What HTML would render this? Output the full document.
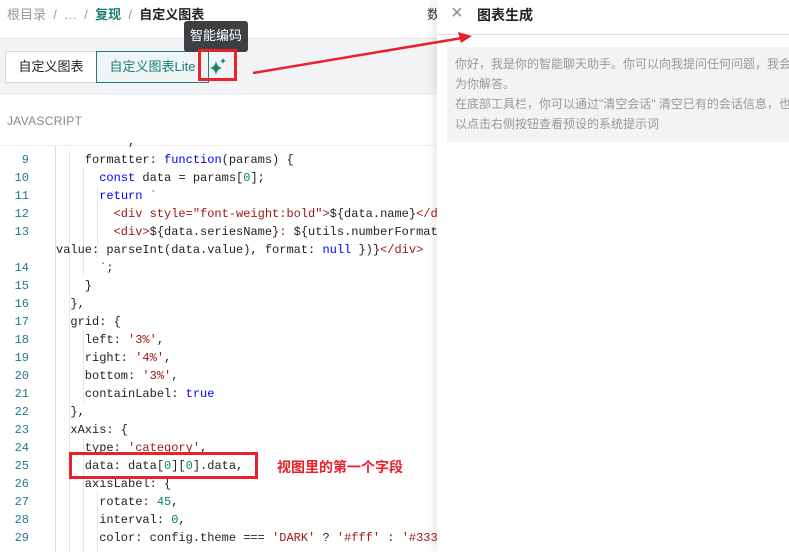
<!DOCTYPE html>
<html><head><meta charset="utf-8"><style>
*{margin:0;padding:0;box-sizing:border-box}
body{width:789px;height:552px;overflow:hidden;position:relative;background:#fff;font-family:"Liberation Sans","Noto Sans CJK SC",sans-serif}
.abs{position:absolute}
.crumb{left:7px;top:4px;font-size:13px;color:#999;white-space:nowrap}
.crumb b{font-weight:bold}
.bar{left:0;top:38px;width:437px;height:57px;background:#f2f3f5;border-top:1px solid #e3e5e8}
.btn{top:51px;height:32px;font-size:13px;line-height:30px;text-align:center}
.code{font-family:"Liberation Mono",monospace;font-size:12px;line-height:18px;white-space:pre;color:#222}
.ln{left:0;width:29px;text-align:right;color:#237893;font-family:"Liberation Mono",monospace;font-size:12px;line-height:18px}
.k{color:#00f}.s{color:#a31515}.n{color:#098658}
.panel{left:437px;top:0;width:352px;height:552px;background:#fff;box-shadow:-4px 0 8px rgba(0,0,0,.08)}
</style></head><body>
<div class="abs crumb">根目录 &nbsp;/ &nbsp;… &nbsp;/ &nbsp;<b style="color:#1b7f74">复现</b> &nbsp;/ &nbsp;<b style="color:#222">自定义图表</b></div>
<div class="abs" style="left:427px;top:4px;font-size:13px;color:#333">数</div>
<div class="abs bar"></div>
<div class="abs btn" style="left:5px;width:92px;border:1px solid #d5d8dc;background:#fff;color:#222">自定义图表</div>
<div class="abs btn" style="left:96px;width:113px;border:1px solid #1b7f74;background:#eef5f4;color:#1b7f74">自定义图表Lite</div>
<svg class="abs" style="left:208px;top:57px" width="20" height="20" viewBox="0 0 20 20"><path d="M8 4 Q9 10 14 11 Q9 12 8 18 Q7 12 2 11 Q7 10 8 4Z" fill="#1b7f74"/><path d="M15 1 Q15.5 3.5 18 4 Q15.5 4.5 15 7 Q14.5 4.5 12 4 Q14.5 3.5 15 1Z" fill="#1b7f74"/></svg>
<div class="abs" style="left:184px;top:21px;width:64px;height:31px;background:#3c4043;border-radius:3px;color:#fff;font-size:13px;line-height:29px;text-align:center">智能编码</div>
<div class="abs" style="left:198px;top:49px;width:39px;height:32px;border:3px solid #e8212a"></div>
<div class="abs" style="left:7px;top:114px;font-size:12px;color:#888;letter-spacing:.3px">JAVASCRIPT</div>
<div class="abs" style="left:0;top:145px;width:437px;height:1px;background:#eee"></div>
<div class="abs" style="left:55px;top:146px;width:1px;height:406px;background:#ddd"></div>
<div class="abs" style="left:69px;top:150px;width:1px;height:402px;background:#e6e6e6"></div>
<div class="abs" style="left:83px;top:168px;width:1px;height:108px;background:#e6e6e6"></div>
<div class="abs" style="left:97px;top:186px;width:1px;height:72px;background:#e6e6e6"></div>
<div class="abs" style="left:83px;top:330px;width:1px;height:72px;background:#e6e6e6"></div>
<div class="abs" style="left:83px;top:438px;width:1px;height:114px;background:#e6e6e6"></div>
<div class="abs" style="left:97px;top:492px;width:1px;height:60px;background:#e6e6e6"></div>
<div class="abs ln" style="top:151px">9<br>10<br>11<br>12<br>13<br><br>14<br>15<br>16<br>17<br>18<br>19<br>20<br>21<br>22<br>23<br>24<br>25<br>26<br>27<br>28<br>29</div>
<div class="abs code" style="left:56px;top:133px">          ,
    formatter: <span class="k">function</span>(params) {
      <span class="k">const</span> data = params[<span class="n">0</span>];
      <span class="k">return</span> <span class="s">`</span>
        <span class="s">&lt;div style="font-weight:bold"&gt;</span>${data.name}<span class="s">&lt;/d</span>
        <span class="s">&lt;div&gt;</span>${data.seriesName}<span class="s">: </span>${utils.numberFormat
value: parseInt(data.value), format: <span class="k">null</span> })}<span class="s">&lt;/div&gt;</span>
      <span class="s">`</span>;
    }
  },
  grid: {
    left: <span class="s">'3%'</span>,
    right: <span class="s">'4%'</span>,
    bottom: <span class="s">'3%'</span>,
    containLabel: <span class="k">true</span>
  },
  xAxis: {
    type: <span class="s">'category'</span>,
    data: data[<span class="n">0</span>][<span class="n">0</span>].data,
    axisLabel: {
      rotate: <span class="n">45</span>,
      interval: <span class="n">0</span>,
      color: config.theme === <span class="s">'DARK'</span> ? <span class="s">'#fff'</span> : <span class="s">'#333</span></div>
<div class="abs" style="left:69px;top:452px;width:189px;height:27px;border:3px solid #e8212a"></div>
<div class="abs" style="left:277px;top:457px;font-size:14px;font-weight:bold;color:#e8212a">视图里的第一个字段</div>
<div class="abs panel">
<div class="abs" style="left:14px;top:2px;font-size:20px;color:#888;font-weight:300">×</div>
<div class="abs" style="left:40px;top:5px;font-size:14px;font-weight:bold;color:#222">图表生成</div>
<div class="abs" style="left:0;top:34px;width:352px;height:1px;background:#dcdde3"></div>
<div class="abs" style="left:10px;top:47px;width:342px;height:95px;background:#f2f3f5"></div>
<div class="abs" style="left:18px;top:54px;width:340px;font-size:12px;line-height:20px;color:#999;white-space:nowrap">你好，我是你的智能聊天助手。你可以向我提问任何问题，我会<br>为你解答。<br>在底部工具栏，你可以通过"清空会话" 清空已有的会话信息，也<br>以点击右侧按钮查看预设的系统提示词</div>
</div>
<svg class="abs" style="left:0;top:0" width="789" height="552"><line x1="253" y1="73" x2="462" y2="38" stroke="#e8212a" stroke-width="2.5"/><path d="M472 36 L458 32 L461 43Z" fill="#e8212a"/></svg>
</body></html>
